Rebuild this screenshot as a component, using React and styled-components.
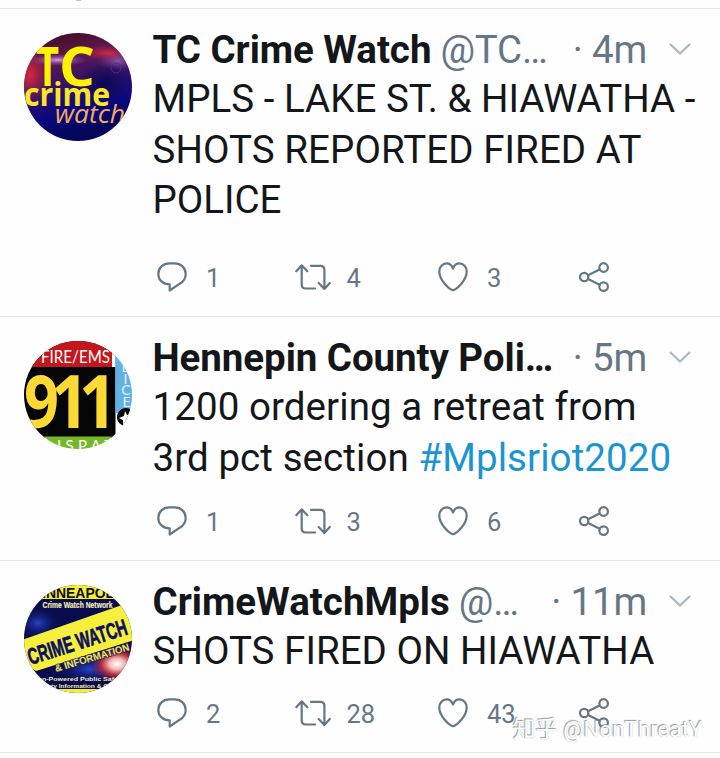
import React from 'react';
import styled, { createGlobalStyle } from 'styled-components';

const GlobalStyle = createGlobalStyle`
  body {
    margin: 0;
    background: #fefefe;
    font-family: Roboto, "Noto Sans CJK SC", sans-serif;
    overflow: hidden;
  }
`;

const Feed = styled.main`
  position: relative;
  width: 720px;
  height: 758px;
  overflow: hidden;
`;

const FeedTop = styled.div`
  height: 8px;
  padding-left: 76px;
  border-bottom: 1px solid #e1e5e7;
`;

const Remnant = styled.div`
  width: 5px;
  height: 1px;
  background: #c3c5c7;
`;

const Tweet = styled.article`
  display: flex;
  align-items: flex-start;
  height: ${(props) => props.$height}px;
  box-sizing: border-box;
  padding: 15px 0 0 24px;
  border-bottom: 1px solid ${(props) => props.$line || '#e1e5e7'};
`;

const Avatar = styled.svg`
  width: 108px;
  height: 108px;
  margin-top: 9px;
  flex: none;
  border-radius: 50%;
`;

const Content = styled.div`
  flex: 1;
  min-width: 0;
  margin-left: 20.5px;
`;

const Header = styled.div`
  display: flex;
  align-items: center;
  height: 50px;
  padding-right: 29px;
  font-size: 38.5px;
  line-height: 51px;
  white-space: nowrap;
  color: #657786;
`;

const Name = styled.span`
  font-weight: 700;
  color: #14171a;
  letter-spacing: ${(props) => props.$spacing || 0}px;
`;

const Handle = styled.span`
  margin-left: 9px;
  letter-spacing: ${(props) => props.$spacing || 0}px;
`;

const Time = styled.span`
  margin-left: auto;
  letter-spacing: -0.2px;
`;

const Chevron = styled.svg`
  width: 22px;
  height: 12px;
  margin-left: 22px;
  fill: none;
  stroke: #aab8c2;
  stroke-width: 2.2;
`;

const Line = styled.div`
  height: 50.5px;
  font-size: 38.5px;
  line-height: 50.5px;
  white-space: nowrap;
  color: #14171a;
  letter-spacing: ${(props) => props.$spacing || 0}px;
`;

const Hashtag = styled.span`
  color: #1b95d0;
`;

const Actions = styled.div`
  display: grid;
  grid-template-columns: 138px 143px 141px 40px;
  height: 30px;
  margin-top: ${(props) => props.$gap}px;
  padding-left: 4.5px;
`;

const Action = styled.div`
  display: flex;
  align-items: center;
  color: #657786;
`;

const ActionIcon = styled.svg`
  width: ${(props) => props.$width || 30}px;
  height: 30px;
  flex: none;
  fill: none;
  stroke: #657786;
  stroke-width: 2.2;
  stroke-linecap: round;
  stroke-linejoin: round;
`;

const Count = styled.span`
  margin-left: ${(props) => props.$gap}px;
  font-size: 25.5px;
  line-height: 30px;
  padding-top: 2px;
`;

const Watermark = styled.div`
  position: absolute;
  left: 513px;
  top: 713px;
  font-size: 22.4px;
  line-height: 32px;
  white-space: nowrap;
  color: #fff;
  text-shadow: -1px -1px 1px rgba(120, 115, 112, 0.7), 0 0 1px rgba(120, 115, 112, 0.5);
`;

const TcAvatar = () => (
  <Avatar viewBox="0 0 108 108">
    <defs>
      <linearGradient id="tcBase" x1="0" y1="0" x2="0.25" y2="1">
        <stop offset="0" stopColor="#3b0711" />
        <stop offset="0.3" stopColor="#5c1950" />
        <stop offset="0.58" stopColor="#2d116b" />
        <stop offset="0.8" stopColor="#08077f" />
        <stop offset="1" stopColor="#05055a" />
      </linearGradient>
      <radialGradient id="tcRed">
        <stop offset="0" stopColor="#d8283f" />
        <stop offset="1" stopColor="#b01c3c" stopOpacity="0" />
      </radialGradient>
      <radialGradient id="tcPink">
        <stop offset="0" stopColor="#d59adf" />
        <stop offset="1" stopColor="#8a3fa8" stopOpacity="0" />
      </radialGradient>
      <radialGradient id="tcNavy">
        <stop offset="0" stopColor="#0b0750" />
        <stop offset="1" stopColor="#0b0750" stopOpacity="0" />
      </radialGradient>
    </defs>
    <rect width="108" height="108" fill="url(#tcBase)" />
    <ellipse cx="6" cy="42" rx="22" ry="32" fill="url(#tcRed)" />
    <ellipse cx="84" cy="20" rx="28" ry="8" fill="url(#tcRed)" />
    <ellipse cx="94" cy="28" rx="22" ry="10" fill="url(#tcPink)" opacity="0.5" />
    <ellipse cx="34" cy="27" rx="30" ry="6" fill="url(#tcPink)" />
    <ellipse cx="80" cy="50" rx="26" ry="20" fill="url(#tcNavy)" />
    <circle cx="92" cy="35" r="5" fill="none" stroke="#4d2f86" strokeWidth="1" />
    <g fontFamily="Open Sans" fontWeight="700" fill="#fff200">
      <text x="12" y="53" fontSize="53" textLength="23" lengthAdjust="spacingAndGlyphs">T</text>
      <text x="35" y="53" fontSize="53" textLength="36" lengthAdjust="spacingAndGlyphs">C</text>
      <text x="0" y="73" fontSize="32" textLength="86" lengthAdjust="spacingAndGlyphs" fill="#fbe72a">crime</text>
    </g>
    <text x="31" y="89.5" fontFamily="Open Sans" fontStyle="italic" fontSize="26" textLength="70" lengthAdjust="spacingAndGlyphs" fill="#f2ab5c">watch</text>
  </Avatar>
);

const HennepinAvatar = () => (
  <Avatar viewBox="0 0 108 108">
    <rect width="108" height="108" fill="#fff" />
    <rect width="91.5" height="97" fill="#050505" />
    <rect width="88" height="26" fill="#c4161c" />
    <rect x="88" width="3.5" height="26" fill="#fff" />
    <rect x="91.5" width="16.5" height="72" fill="#62b1e5" />
    <rect y="95.5" width="91.5" height="13" fill="#76b82a" />
    <text x="17" y="21.5" fontFamily="Lato" fontSize="18" textLength="69" lengthAdjust="spacingAndGlyphs" fill="#fff">FIRE/EMS</text>
    <g fontFamily="Open Sans" fontWeight="700" fontSize="73" fill="#fdd935">
      <text x="0" y="87" textLength="35" lengthAdjust="spacingAndGlyphs">9</text>
      <text x="27" y="87" textLength="38" lengthAdjust="spacingAndGlyphs">1</text>
      <text x="55" y="87" textLength="38" lengthAdjust="spacingAndGlyphs">1</text>
    </g>
    <g fontFamily="Lato" fontSize="14" textAnchor="middle" fill="#e4f3fc">
      <text x="101" y="31">L</text>
      <text x="101.5" y="42.5">I</text>
      <text x="102" y="54">C</text>
      <text x="102.5" y="66">E</text>
    </g>
    <text x="33" y="110" fontFamily="Lato" fontSize="15" textLength="56" fill="#fff">ISPAT</text>
    <path d="M106 68 A9 9 0 1 0 103 85 L108 80Z" fill="#050505" />
    <path d="M101 70l2 4 5-1-3 5 3 5-6-2-3 4v-6l-4-2 5-2z" fill="#fff" />
  </Avatar>
);

const CrimeWatchAvatar = () => (
  <Avatar viewBox="0 0 108 108">
    <defs>
      <radialGradient id="cwBlue">
        <stop offset="0" stopColor="#2545c4" />
        <stop offset="1" stopColor="#0a1263" stopOpacity="0" />
      </radialGradient>
      <radialGradient id="cwFlash">
        <stop offset="0" stopColor="#fff" />
        <stop offset="0.3" stopColor="#f3b9b4" />
        <stop offset="0.6" stopColor="#d2333a" stopOpacity="0.85" />
        <stop offset="1" stopColor="#a01335" stopOpacity="0" />
      </radialGradient>
    </defs>
    <rect width="108" height="108" fill="#090c4c" />
    <ellipse cx="14" cy="38" rx="22" ry="16" fill="url(#cwBlue)" />
    <ellipse cx="66" cy="84" rx="36" ry="16" fill="url(#cwBlue)" />
    <ellipse cx="93" cy="79" rx="26" ry="18" fill="url(#cwFlash)" />
    <rect width="108" height="14" fill="#f4ed3c" />
    <polygon points="-2,55 98,20 110,34 110,55 12,86 -2,78" fill="#f6ef3e" />
    <g fontFamily="Liberation Sans" fontWeight="700">
      <text x="18" y="12.5" fontSize="14" textLength="76" lengthAdjust="spacingAndGlyphs" fill="#101010">INNEAPOLI</text>
      <text x="18.5" y="23.3" fontSize="9.5" textLength="70" lengthAdjust="spacingAndGlyphs" fill="#f3edb6" stroke="#f3edb6" strokeWidth="0.2">Crime Watch Network</text>
      <text transform="translate(6.5 80) rotate(-17.5)" fontSize="23" textLength="103" lengthAdjust="spacingAndGlyphs" fill="#0b1060" stroke="#0b1060" strokeWidth="0.7">CRIME WATCH</text>
      <text transform="translate(32 87) rotate(-16.5)" fontSize="10" textLength="77" lengthAdjust="spacingAndGlyphs" fill="#f0e65a" stroke="#24245a" strokeWidth="1.4" paintOrder="stroke">&amp; INFORMATION</text>
      <text x="14" y="95.5" fontSize="6" textLength="80" lengthAdjust="spacingAndGlyphs" fill="#f3edb6">en-Powered Public Safe</text>
      <text x="27" y="102.5" fontSize="6" textLength="57" lengthAdjust="spacingAndGlyphs" fill="#f3edb6">ty Information &amp; C</text>
    </g>
    <rect y="104" width="108" height="4" fill="#f4ed3c" />
  </Avatar>
);

const ReplyIcon = () => (
  <ActionIcon viewBox="0 0 30 30">
    <path d="M12.3 1.3h5.4C24 1.3 28.7 6 28.7 12c0 4.2-2.2 7.5-5.9 9.7L12.7 28.5v-6.2C6 22.3 1.3 18 1.3 12S6 1.3 12.3 1.3z" />
  </ActionIcon>
);

const RetweetIcon = () => (
  <ActionIcon viewBox="0 0 36 30" $width={36}>
    <path d="M1.3 9.2 6.7 3.3l5.6 5.9M6.7 4v18.5c0 2.7 1.2 4 3.9 4H20M16 3.8h9.4c2.7 0 4 1.3 4 4v18.4M23.7 21l5.7 5.9 5.4-5.9" />
  </ActionIcon>
);

const HeartIcon = () => (
  <ActionIcon viewBox="0 0 30 30">
    <path d="M15 28.3C11 27.2 1.3 18.3 1.3 9.5c0-4.8 3.3-8.1 7.3-8.1 3 0 5.2 1.9 6.4 5.1 1.2-3.2 3.4-5.1 6.4-5.1 4 0 7.3 3.3 7.3 8.1C28.7 18.3 19 27.2 15 28.3z" />
  </ActionIcon>
);

const ShareIcon = () => (
  <ActionIcon viewBox="0 0 30 30">
    <circle cx="5.2" cy="15" r="4.2" />
    <circle cx="24.6" cy="5.5" r="4.3" />
    <circle cx="24.6" cy="24.6" r="4.3" />
    <path d="M9 13.2 20.6 7.4M9 16.9l11.7 5.8" />
  </ActionIcon>
);

const TweetHeader = ({ name, nameSpacing, handle, handleSpacing, time }) => (
  <Header>
    <Name $spacing={nameSpacing}>{name}</Name>
    {handle && <Handle $spacing={handleSpacing}>{handle}</Handle>}
    <Time>· {time}</Time>
    <Chevron viewBox="0 0 22 12">
      <path d="M1 1l10 9.5L21 1" />
    </Chevron>
  </Header>
);

const TweetActions = ({ gap, replies, retweets, likes }) => (
  <Actions $gap={gap}>
    <Action>
      <ReplyIcon />
      <Count $gap={19}>{replies}</Count>
    </Action>
    <Action>
      <RetweetIcon />
      <Count $gap={15.5}>{retweets}</Count>
    </Action>
    <Action>
      <HeartIcon />
      <Count $gap={19}>{likes}</Count>
    </Action>
    <Action>
      <ShareIcon />
    </Action>
  </Actions>
);

export default function App() {
  return (
    <>
      <GlobalStyle />
      <Feed>
        <FeedTop>
          <Remnant />
        </FeedTop>

        <Tweet $height={308}>
          <TcAvatar />
          <Content>
            <TweetHeader name="TC Crime Watch" nameSpacing={-0.05} handle="@TC…" handleSpacing={-0.2} time="4m" />
            <Line $spacing={0.03}>MPLS - LAKE ST. &amp; HIAWATHA -</Line>
            <Line $spacing={0.07}>SHOTS REPORTED FIRED AT</Line>
            <Line>POLICE</Line>
            <TweetActions gap={35.5} replies="1" retweets="4" likes="3" />
          </Content>
        </Tweet>

        <Tweet $height={244}>
          <HennepinAvatar />
          <Content>
            <TweetHeader name="Hennepin County Poli…" nameSpacing={-0.07} time="5m" />
            <Line $spacing={0.08}>1200 ordering a retreat from</Line>
            <Line $spacing={0.08}>
              3rd pct section <Hashtag>#Mplsriot2020</Hashtag>
            </Line>
            <TweetActions gap={21.5} replies="1" retweets="3" likes="6" />
          </Content>
        </Tweet>

        <Tweet $height={192} $line="#dbe6ea">
          <CrimeWatchAvatar />
          <Content>
            <TweetHeader name="CrimeWatchMpls" handle="@…" handleSpacing={-0.2} time="11m" />
            <Line $spacing={0.03}>SHOTS FIRED ON HIAWATHA</Line>
            <TweetActions gap={20.5} replies="2" retweets="28" likes="43" />
          </Content>
        </Tweet>

        <Watermark>知乎 @NonThreatY</Watermark>
      </Feed>
    </>
  );
}
